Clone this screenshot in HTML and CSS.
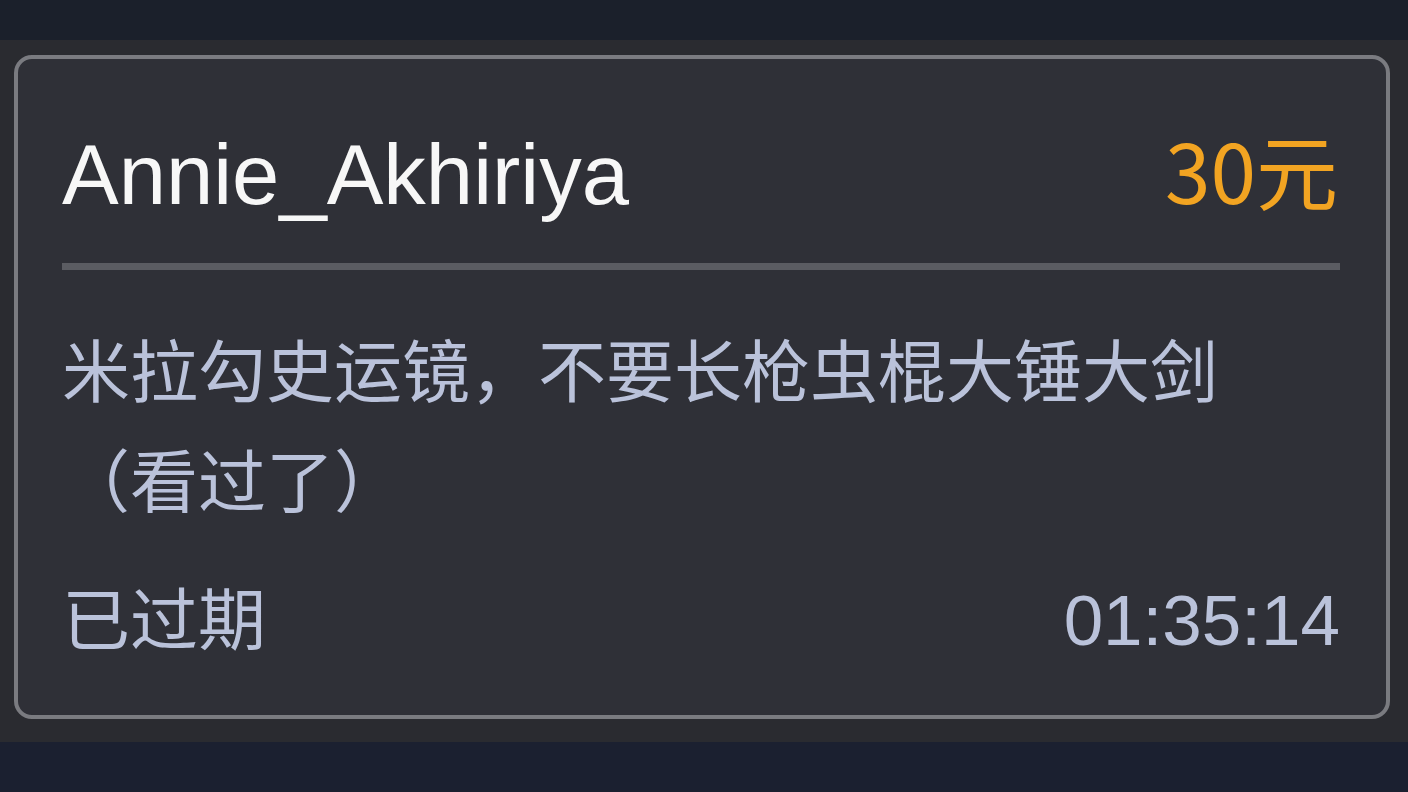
FILE: index.html
```html
<!DOCTYPE html>
<html lang="zh-CN">
<head>
    <meta charset="UTF-8">
    <meta name="viewport" content="width=device-width, initial-scale=1.0">
    <title>订单</title>
    <link rel="stylesheet" href="styles.css">
</head>
<body>
    <div class="top-bar"></div>

    <div class="panel">
        <div class="order-card">
            <div class="order-head">
                <span class="order-name">Annie_Akhiriya</span>
                <span class="order-price">30元</span>
            </div>

            <div class="order-divider"></div>

            <p class="order-text">米拉勾史运镜，不要长枪虫棍大锤大剑（看过了）</p>

            <div class="order-foot">
                <span class="order-status">已过期</span>
                <span class="order-time">01:35:14</span>
            </div>
        </div>
    </div>

    <div class="bottom-bar"></div>
</body>
</html>
```

FILE: styles.css
```css
body {
    margin: 0;
    width: 1408px;
    height: 792px;
    overflow: hidden;
    background-color: #1b2030;
    font-family: "Liberation Sans", "Noto Sans CJK SC", sans-serif;
}

.top-bar {
    height: 40px;
    background-color: #1b202b;
}

/* Zona gris alrededor de la tarjeta */
.panel {
    height: 702px;
    box-sizing: border-box;
    padding: 15px 18px 0 14px;
    background-color: #2a2b30;
}

.order-card {
    height: 664px;
    box-sizing: border-box;
    padding: 60px 46px 0 44px;
    border: 4px solid #7a7b80;
    border-radius: 18px;
    background-color: #2f3037;
}

.order-head {
    display: flex;
    justify-content: space-between;
    align-items: baseline;
    height: 100px;
    line-height: 100px;
}

.order-name {
    font-size: 85px;
    color: #f7f7f7;
}

.order-price {
    font-family: "Noto Sans CJK SC", sans-serif;
    font-size: 82px;
    color: #f2a422;
    margin-right: 2px;
}

.order-divider {
    height: 7px;
    margin-top: 44px;
    background-color: #5b5c62;
}

.order-text {
    margin: 48px 0 0;
    font-size: 68px;
    line-height: 110px;
    color: #bac2da;
}

.order-foot {
    display: flex;
    justify-content: space-between;
    margin-top: 28px;
    font-size: 68px;
    line-height: 110px;
    color: #bac2da;
}

.order-time {
    font-size: 71px;
}
```
